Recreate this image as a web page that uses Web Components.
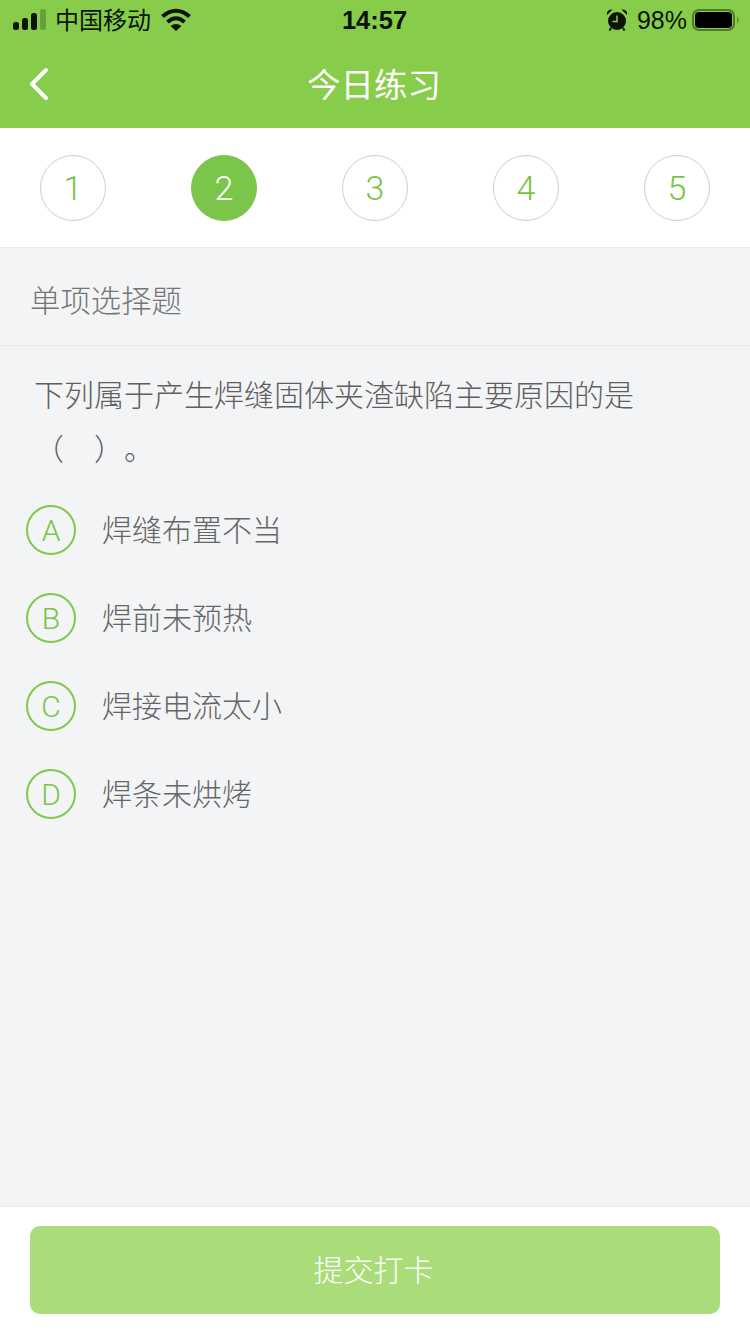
<!DOCTYPE html>
<html lang="zh-CN">
<head>
<meta charset="utf-8">
<title>今日练习</title>
<style>
  html, body { margin: 0; padding: 0; }
  body { font-family: "Noto Sans CJK SC", "Liberation Sans", sans-serif; }
</style>
</head>
<body>
<practice-page>
  <status-bar></status-bar>
  <nav-bar>今日练习</nav-bar>
  <step-list>
    <step-dot>1</step-dot>
    <step-dot active>2</step-dot>
    <step-dot>3</step-dot>
    <step-dot>4</step-dot>
    <step-dot>5</step-dot>
  </step-list>
  <section-title>单项选择题</section-title>
  <question-block>
    <div>下列属于产生焊缝固体夹渣缺陷主要原因的是</div>
    <div>（　）。</div>
  </question-block>
  <option-row letter="A">焊缝布置不当</option-row>
  <option-row letter="B">焊前未预热</option-row>
  <option-row letter="C">焊接电流太小</option-row>
  <option-row letter="D">焊条未烘烤</option-row>
  <submit-bar>提交打卡</submit-bar>
</practice-page>

<script>
class PracticePage extends HTMLElement {
  constructor() {
    super();
    this.shadowDOM = this.attachShadow({ mode: "open" });
    this.shadowDOM.innerHTML = `
      <style>
        :host {
          display: flex;
          flex-direction: column;
          width: 750px;
          height: 1334px;
          overflow: hidden;
          background-color: #f2f4f6;
        }
      </style>
      <slot></slot>
    `;
  }
}
customElements.define("practice-page", PracticePage);


class StatusBar extends HTMLElement {
  constructor() {
    super();
    this.shadowDOM = this.attachShadow({ mode: "open" });
    this.shadowDOM.innerHTML = `
      <style>
        :host {
          display: grid;
          grid-template-columns: 1fr auto 1fr;
          align-items: center;
          height: 40px;
          padding: 0 14px 0 13px;
          background-color: #87cd4b;
          color: #0b1406;
          font-size: 24px;
        }
        .left, .right { display: flex; align-items: center; }
        .right { justify-content: flex-end; margin-right: -3px; }
        .carrier { margin: 0 0 4px 8px; }
        .wifi { margin-left: 10px; }
        .time { font: bold 25.500px "Liberation Sans", sans-serif; }
        .percent { font: 25px "Liberation Sans", sans-serif; margin: 0 4px 0 9px; }
        svg { display: block; }
      </style>
      <div class="left">
        <svg width="34" height="24" viewBox="0 0 34 24">
          <rect x="0" y="14" width="6" height="8" rx="2.500" fill="#0b1406"/>
          <rect x="9" y="10" width="6" height="12" rx="2.500" fill="#0b1406"/>
          <rect x="18" y="5" width="6" height="17" rx="2.500" fill="#0b1406"/>
          <rect x="27" y="1" width="6" height="21" rx="2.500" fill="#66a03c"/>
        </svg>
        <span class="carrier">中国移动</span>
        <svg class="wifi" width="30" height="24" viewBox="0 0 30 24">
          <path d="M1.500 8.500Q15-3 28.500 8.500" fill="none" stroke="#0b1406" stroke-width="4"/>
          <path d="M6.500 14Q15 6.500 23.500 14" fill="none" stroke="#0b1406" stroke-width="4"/>
          <path d="M9.500 18Q15 14 20.500 18L15 23z" fill="#0b1406"/>
        </svg>
      </div>
      <span class="time">14:57</span>
      <div class="right">
        <svg width="22" height="24" viewBox="0 0 22 24">
          <circle cx="11" cy="13" r="9" fill="#0b1406"/>
          <path d="M11 7.500v6H6.500" fill="none" stroke="#87cd4b" stroke-width="1.500"/>
          <path d="M1 7Q0 1.500 6.500 1.500zM21 7Q22 1.500 15.500 1.500z" fill="#0b1406"/>
          <path d="M5 20 3.500 22.500M17 20 18.500 22.500" stroke="#0b1406" stroke-width="2"/>
        </svg>
        <span class="percent">98%</span>
        <svg width="48" height="24" viewBox="0 0 48 24">
          <rect x="2" y="2" width="41" height="20" rx="6" fill="none" stroke="#4c7c2a" stroke-width="2"/>
          <rect x="4" y="4" width="37" height="16" rx="4" fill="#000"/>
          <path d="M46 8.500c1 .5 1.500 2 1.500 3.500s-.5 3-1.500 3.500z" fill="#5d9237"/>
        </svg>
      </div>
    `;
  }
}
customElements.define("status-bar", StatusBar);


class NavBar extends HTMLElement {
  constructor() {
    super();
    this.shadowDOM = this.attachShadow({ mode: "open" });
    this.shadowDOM.innerHTML = `
      <style>
        :host {
          display: grid;
          grid-template-columns: 1fr auto 1fr;
          align-items: center;
          height: 88px;
          padding-bottom: 4px;
          box-sizing: border-box;
          background-color: #87cd4b;
          color: #fff;
          font-size: 33.500px;
        }
        svg { display: block; margin: 4px 0 0 29px; }
        .title { padding-right: 2px; }
      </style>
      <svg width="20" height="34" viewBox="0 0 20 34">
        <path d="M17 3 3 17l14 14" fill="none" stroke="#fff" stroke-width="4" stroke-linecap="round" stroke-linejoin="round"/>
      </svg>
      <span class="title"><slot></slot></span>
      <span></span>
    `;
  }
}
customElements.define("nav-bar", NavBar);


class StepList extends HTMLElement {
  constructor() {
    super();
    this.shadowDOM = this.attachShadow({ mode: "open" });
    this.shadowDOM.innerHTML = `
      <style>
        :host {
          display: flex;
          justify-content: space-between;
          padding: 27px 40px 26px;
          background-color: #fff;
          border-bottom: 1px solid #e9eaec;
        }
      </style>
      <slot></slot>
    `;
  }
}
customElements.define("step-list", StepList);


class StepDot extends HTMLElement {
  constructor() {
    super();
    this.shadowDOM = this.attachShadow({ mode: "open" });
    this.shadowDOM.innerHTML = `
      <style>
        :host {
          display: flex;
          align-items: center;
          justify-content: center;
          width: 66px;
          height: 66px;
          box-sizing: border-box;
          border: 1px solid #cfcfcf;
          border-radius: 50%;
          color: #78c444;
          font: 300 34px Roboto, "Liberation Sans", sans-serif;
        }
        :host([active]) {
          background-color: #7ac54a;
          border-color: #7ac54a;
          color: #fff;
        }
      </style>
      <slot></slot>
    `;
  }
}
customElements.define("step-dot", StepDot);


class SectionTitle extends HTMLElement {
  constructor() {
    super();
    this.shadowDOM = this.attachShadow({ mode: "open" });
    this.shadowDOM.innerHTML = `
      <style>
        :host {
          display: flex;
          align-items: center;
          height: 98px;
          box-sizing: border-box;
          padding: 4px 30px 0;
          border-bottom: 1px solid #e9eaec;
          color: #757575;
          font-size: 30.400px;
          font-weight: 300;
        }
      </style>
      <slot></slot>
    `;
  }
}
customElements.define("section-title", SectionTitle);


class QuestionBlock extends HTMLElement {
  constructor() {
    super();
    this.shadowDOM = this.attachShadow({ mode: "open" });
    this.shadowDOM.innerHTML = `
      <style>
        :host {
          display: block;
          padding: 20px 35px 12px 34px;
          color: #5f5f5f;
          font-size: 30px;
          font-weight: 300;
          line-height: 54px;
          text-spacing-trim: space-all;
        }
      </style>
      <slot></slot>
    `;
  }
}
customElements.define("question-block", QuestionBlock);


class OptionRow extends HTMLElement {
  constructor() {
    super();
    this.shadowDOM = this.attachShadow({ mode: "open" });
    this.shadowDOM.innerHTML = `
      <style>
        :host {
          display: flex;
          align-items: center;
          gap: 26px;
          height: 88px;
          padding-left: 26px;
          color: #666;
          font-size: 30px;
          font-weight: 300;
        }
        .label { margin-bottom: 4px; }
        .letter {
          display: flex;
          align-items: center;
          justify-content: center;
          width: 50px;
          height: 50px;
          box-sizing: border-box;
          border: 2px solid #80c94e;
          border-radius: 50%;
          color: #7ac548;
          font: 300 30px Roboto, "Liberation Sans", sans-serif;
        }
      </style>
      <span class="letter"></span>
      <span class="label"><slot></slot></span>
    `;
  }

  connectedCallback() {
    this.shadowDOM.querySelector(".letter").textContent = this.getAttribute("letter");
  }
}
customElements.define("option-row", OptionRow);


class SubmitBar extends HTMLElement {
  constructor() {
    super();
    this.shadowDOM = this.attachShadow({ mode: "open" });
    this.shadowDOM.innerHTML = `
      <style>
        :host {
          display: block;
          margin-top: auto;
          padding: 19px 30px 20px;
          background-color: #fff;
          border-top: 1px solid #e9eaec;
        }
        .button {
          display: flex;
          align-items: center;
          justify-content: center;
          height: 88px;
          box-sizing: border-box;
          padding: 0 3px 4px 0;
          border-radius: 10px;
          background-color: #aadc7a;
          color: #fff;
          font-size: 30px;
          font-weight: 300;
        }
      </style>
      <div class="button"><slot></slot></div>
    `;
  }
}
customElements.define("submit-bar", SubmitBar);
</script>
</body>
</html>
